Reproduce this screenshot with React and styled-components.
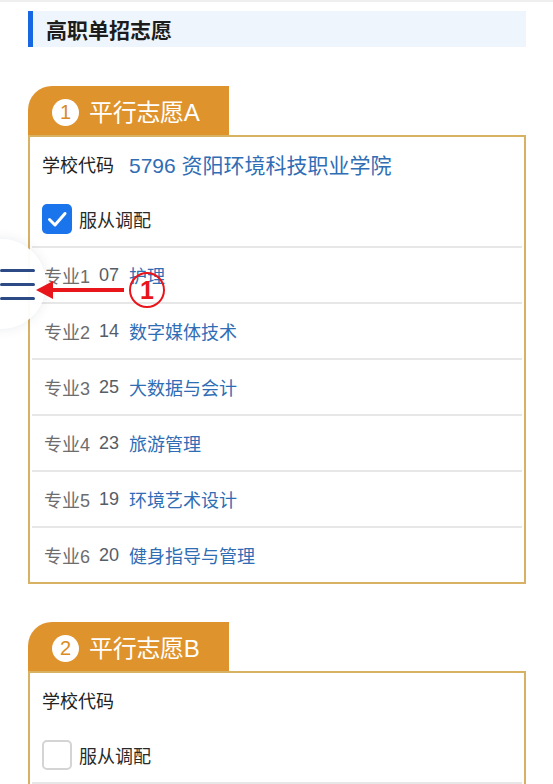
import React from 'react'
import styled, { createGlobalStyle } from 'styled-components';

const GlobalStyle = createGlobalStyle`
    body {
        margin: 0;
        background: #ffffff;
        font-family: 'Liberation Sans', 'Noto Sans CJK SC', sans-serif;
    }
`;

const Page = styled.div`
    position: relative;
    width: 553px;
    height: 784px;
    overflow: hidden;
    box-sizing: border-box;
    border-top: 2px solid #efefef;
    padding: 9px 27px 0 28px;
`;

const SectionTitle = styled.div`
    height: 36px;
    display: flex;
    align-items: center;
    border-left: 5px solid #1767e2;
    background: #eef5fc;
    padding-left: 13px;
    font-size: 21px;
    font-weight: bold;
    color: #1c1c1c;
`;

const Volunteer = styled.div`
    margin-top: ${props => props.$gap}px;
`;

const Tab = styled.div`
    width: 201px;
    height: 49px;
    box-sizing: border-box;
    background: #df932c;
    border-radius: 24px 0 0 0;
    display: flex;
    align-items: center;
    padding-left: 24px;
    gap: 10px;
`;

const TabBadge = styled.span`
    width: 27px;
    height: 27px;
    border-radius: 50%;
    background: #ffffff;
    color: #d98c24;
    font-size: 20px;
    display: flex;
    align-items: center;
    justify-content: center;
    margin-top: 3px;
`;

const TabTitle = styled.span`
    color: #ffffff;
    font-size: 24px;
    letter-spacing: -0.3px;
`;

const Card = styled.div`
    border: 2px solid #d9b163;
    background: #ffffff;
`;

const SchoolRow = styled.div`
    height: 54px;
    display: flex;
    align-items: center;
    padding-left: 12px;
    gap: 15px;
`;

const FieldLabel = styled.span`
    font-size: 18px;
    color: #222222;
`;

const FieldValue = styled.span`
    font-size: 21px;
    color: #2f6db5;
`;

const CheckRow = styled.div`
    height: 55px;
    display: flex;
    align-items: center;
    padding-left: 12px;
    gap: 7px;
`;

const CheckBox = styled.span`
    width: 30px;
    height: 30px;
    box-sizing: border-box;
    border-radius: 5px;
    display: flex;
    align-items: center;
    justify-content: center;
    background: ${props => props.$checked ? '#1a74ec' : '#ffffff'};
    border: ${props => props.$checked ? 'none' : '2px solid #d4d4d4'};
`;

const CheckText = styled.span`
    font-size: 18px;
    color: #2a2a2a;
`;

const MajorRow = styled.div`
    height: 54px;
    margin: 0 2px;
    border-top: 2px solid #e7e7e7;
    display: flex;
    align-items: center;
    padding-left: 12px;
    gap: 9px;
    font-size: 18px;
`;

const MajorLabel = styled.span`
    color: #6d6d6d;
`;

const MajorCode = styled.span`
    color: #555d66;
    margin-right: 1px;
`;

const MajorName = styled.span`
    color: #2f6db5;
`;

const FloatingMenu = styled.div`
    position: absolute;
    left: -44px;
    top: 237px;
    width: 90px;
    height: 90px;
    border-radius: 50%;
    background: rgba(255, 255, 255, 0.96);
    box-shadow: 0 0 12px rgba(40, 60, 90, 0.1);
    display: flex;
    align-items: center;
    justify-content: flex-end;
    padding-right: 11px;
    box-sizing: border-box;
`;

const Annotation = styled.svg`
    position: absolute;
    left: 0;
    top: 250px;
`;

const majorsA = [
    { code: '07', name: '护理' },
    { code: '14', name: '数字媒体技术' },
    { code: '25', name: '大数据与会计' },
    { code: '23', name: '旅游管理' },
    { code: '19', name: '环境艺术设计' },
    { code: '20', name: '健身指导与管理' },
];

function CheckIcon() {
    return (
        <svg width="22" height="22" viewBox="0 0 22 22">
            <path d="M3.5 11.5 L9 17 L19 5.5" fill="none" stroke="#ffffff" strokeWidth="3" strokeLinecap="round" strokeLinejoin="round" />
        </svg>
    )
}

function Choice({ index, title, school, checked, majors, gap }) {
    return (
        <Volunteer $gap={gap}>
            <Tab>
                <TabBadge>{index}</TabBadge>
                <TabTitle>{title}</TabTitle>
            </Tab>
            <Card>
                <SchoolRow>
                    <FieldLabel>学校代码</FieldLabel>
                    {school ? <FieldValue>{school}</FieldValue> : null}
                </SchoolRow>
                <CheckRow>
                    <CheckBox $checked={checked}>
                        {checked ? <CheckIcon /> : null}
                    </CheckBox>
                    <CheckText>服从调配</CheckText>
                </CheckRow>
                {majors.map((m, i) => (
                    <MajorRow key={i}>
                        {m.code ? (
                            <>
                                <MajorLabel>专业{i + 1}</MajorLabel>
                                <MajorCode>{m.code}</MajorCode>
                                <MajorName>{m.name}</MajorName>
                            </>
                        ) : null}
                    </MajorRow>
                ))}
            </Card>
        </Volunteer>
    )
}

export default function App() {
    return (
        <>
            <GlobalStyle />
            <Page>
                <SectionTitle>高职单招志愿</SectionTitle>
                <Choice index="1" title="平行志愿A" school="5796 资阳环境科技职业学院" checked majors={majorsA} gap={39} />
                <Choice index="2" title="平行志愿B" checked={false} majors={[{}]} gap={38} />

                <FloatingMenu>
                    <svg width="35" height="31" viewBox="0 0 35 31">
                        <rect x="0" y="0" width="35" height="3" rx="1.5" fill="#2c4a85" />
                        <rect x="0" y="14" width="35" height="3" rx="1.5" fill="#2c4a85" />
                        <rect x="0" y="28" width="35" height="3" rx="1.5" fill="#2c4a85" />
                    </svg>
                </FloatingMenu>

                <Annotation width="180" height="70" viewBox="0 0 180 70">
                    <line x1="124" y1="38" x2="50" y2="38" stroke="#e8161b" strokeWidth="4" />
                    <polygon points="36,38 53,29 53,47" fill="#e8161b" />
                    <circle cx="147" cy="38" r="17" fill="none" stroke="#e8161b" strokeWidth="2" />
                    <text x="147" y="47" textAnchor="middle" fontSize="25" fontWeight="600" fill="#e8161b" fontFamily="Liberation Sans, sans-serif">1</text>
                </Annotation>
            </Page>
        </>
    )
}
